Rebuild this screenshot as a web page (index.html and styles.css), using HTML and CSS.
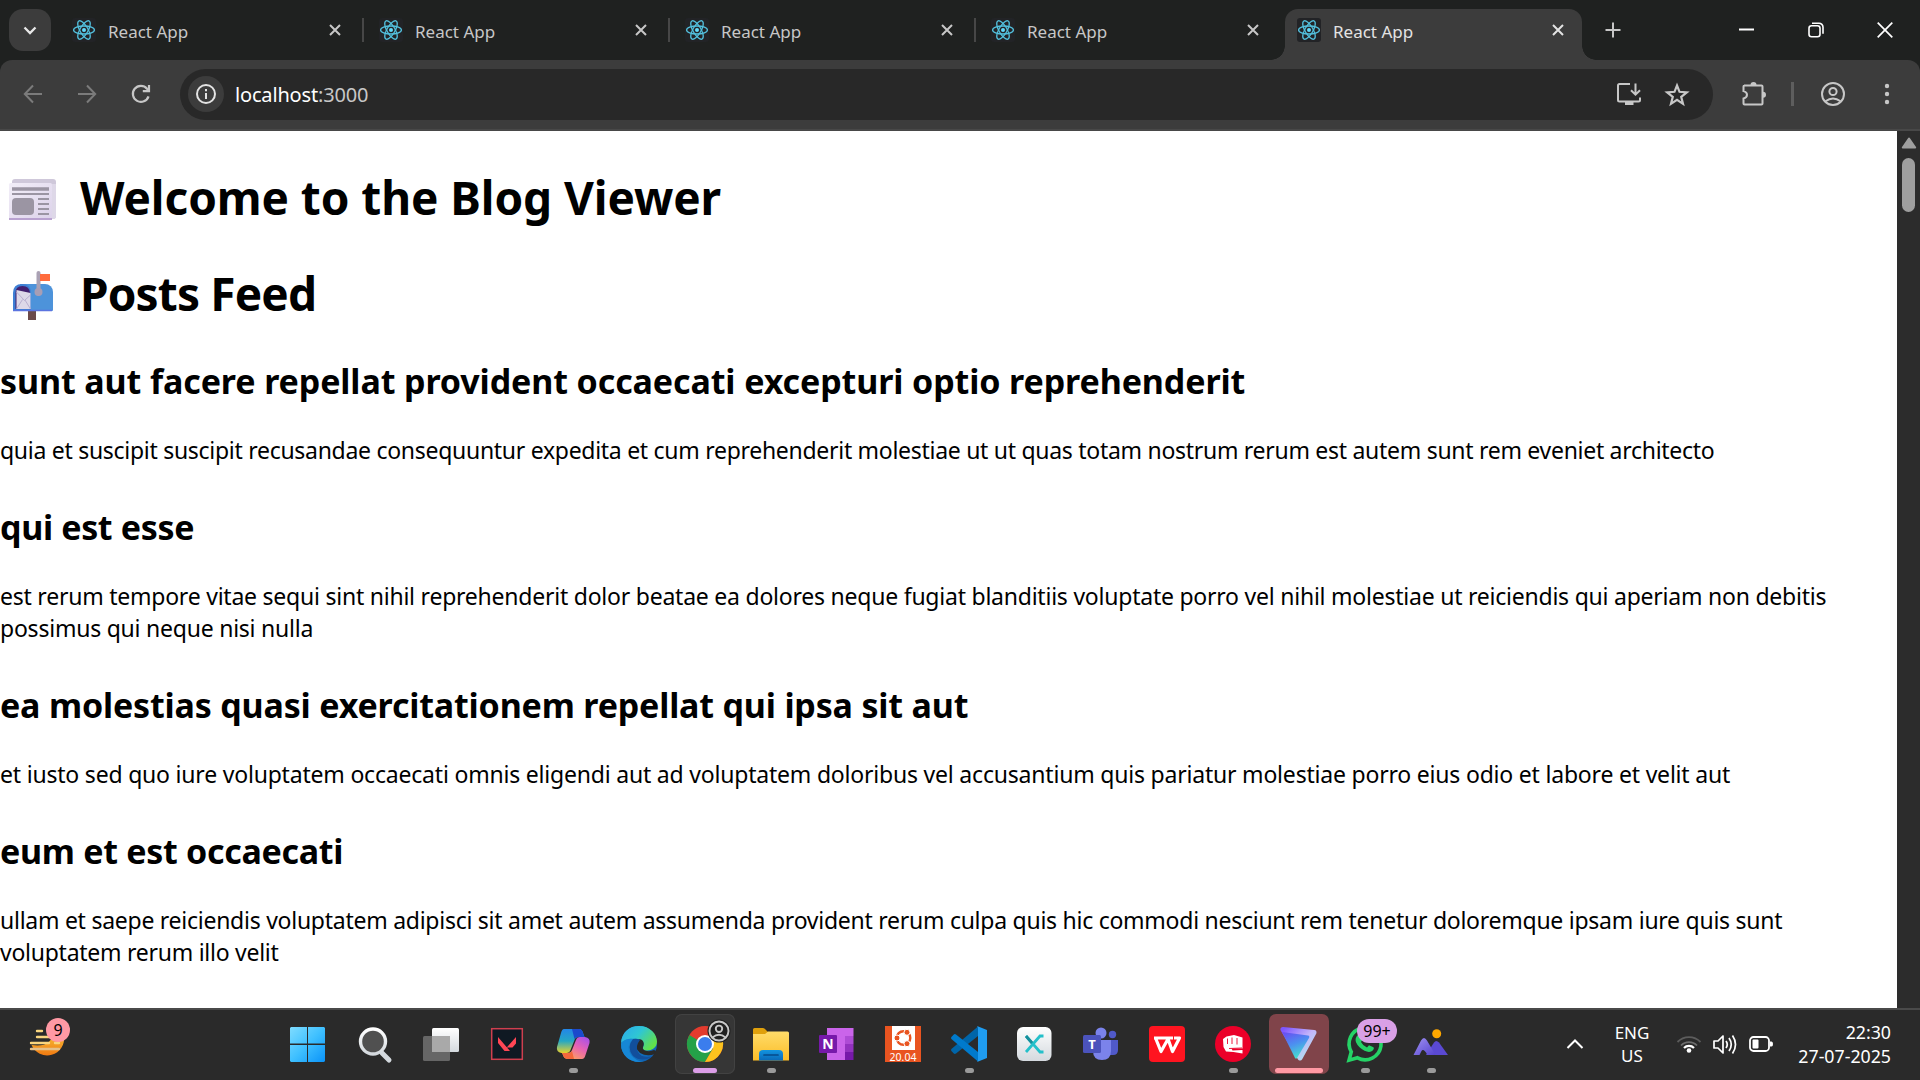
FILE: index.html
```html
<!DOCTYPE html>
<html lang="en">
<head>
<meta charset="utf-8">
<title>React App</title>
<link rel="stylesheet" href="styles.css">
</head>
<body>
<svg width="0" height="0" class="defs">
  <defs>
    <g id="react" fill="none" stroke="#53c1de" stroke-width="1.3">
      <ellipse cx="12" cy="12" rx="10.4" ry="4"/>
      <ellipse cx="12" cy="12" rx="10.4" ry="4" transform="rotate(60 12 12)"/>
      <ellipse cx="12" cy="12" rx="10.4" ry="4" transform="rotate(120 12 12)"/>
      <circle cx="12" cy="12" r="2" fill="#61dafb" stroke="none"/>
    </g>
    <g id="cross" fill="none" stroke-width="2"><path d="M1 1 11 11M11 1 1 11"/></g>
    <linearGradient id="win" x1="0" y1="0" x2="1" y2="1"><stop offset="0" stop-color="#7fdcff"/><stop offset=".5" stop-color="#3fc0ff"/><stop offset="1" stop-color="#0a93f8"/></linearGradient>
    <linearGradient id="moon" x1="0" y1="0" x2="0" y2="1"><stop offset="0" stop-color="#f7c53a"/><stop offset="1" stop-color="#f07a12"/></linearGradient>
    <linearGradient id="silver" x1="0" y1="0" x2="0" y2="1"><stop offset="0" stop-color="#fff"/><stop offset="1" stop-color="#d4d9de"/></linearGradient>
    <linearGradient id="copA" x1="0" y1="0" x2="0" y2="1"><stop offset="0" stop-color="#2386e8"/><stop offset=".5" stop-color="#25a7c4"/><stop offset="1" stop-color="#e8d22c"/></linearGradient>
    <linearGradient id="copB" x1="1" y1="0" x2=".3" y2="1"><stop offset="0" stop-color="#a04df0"/><stop offset=".5" stop-color="#e763b3"/><stop offset="1" stop-color="#ffa35c"/></linearGradient>
    <linearGradient id="edgeTop" x1="0" y1="0" x2="1" y2=".6"><stop offset="0" stop-color="#2ba8ee"/><stop offset=".5" stop-color="#2fc6d4"/><stop offset="1" stop-color="#62e04a"/></linearGradient>
    <linearGradient id="edgeLow" x1="0" y1="0" x2="1" y2="1"><stop offset="0" stop-color="#1b9de2"/><stop offset="1" stop-color="#0d55a8"/></linearGradient>
    <linearGradient id="folder" x1="0" y1="0" x2="0" y2="1"><stop offset="0" stop-color="#ffdc6a"/><stop offset="1" stop-color="#fbbd28"/></linearGradient>
    <linearGradient id="blueTab" x1="0" y1="0" x2="0" y2="1"><stop offset="0" stop-color="#1294e0"/><stop offset="1" stop-color="#0a69b8"/></linearGradient>
    <linearGradient id="proton" x1=".1" y1="0" x2=".5" y2="1"><stop offset="0" stop-color="#6a4cf2"/><stop offset=".5" stop-color="#4c8ff0"/><stop offset="1" stop-color="#45e0cf"/></linearGradient>
    <linearGradient id="protonEdge" x1="0" y1="0" x2="1" y2="1"><stop offset="0" stop-color="#7d55ff"/><stop offset=".5" stop-color="#c4b5fa"/><stop offset="1" stop-color="#a9ecec"/></linearGradient>
    <linearGradient id="hill" x1="0" y1="0" x2="1" y2="1"><stop offset="0" stop-color="#a192f2"/><stop offset="1" stop-color="#5443cf"/></linearGradient>
    <linearGradient id="paper" x1="0" y1="0" x2="1" y2="1"><stop offset="0" stop-color="#f2eef8"/><stop offset="1" stop-color="#dcd2ea"/></linearGradient>
  </defs>
</svg>

<div class="screen">
  <header class="tabstrip">
    <button class="tab-search"><svg width="14" height="9" viewBox="0 0 14 9"><path d="M1.5 1.5 7 7l5.500-5.500" fill="none" stroke="#e8e8e8" stroke-width="2.300"/></svg></button>
    <div class="tabs">
      <div class="tab first"><svg class="favicon" viewBox="0 0 24 24"><rect width="24" height="24" rx="3" fill="#222326"/><use href="#react"/></svg><span class="tab-title">React App</span><svg class="tab-close" viewBox="0 0 12 12"><use href="#cross"/></svg></div>
      <div class="tab"><svg class="favicon" viewBox="0 0 24 24"><rect width="24" height="24" rx="3" fill="#222326"/><use href="#react"/></svg><span class="tab-title">React App</span><svg class="tab-close" viewBox="0 0 12 12"><use href="#cross"/></svg></div>
      <div class="tab"><svg class="favicon" viewBox="0 0 24 24"><rect width="24" height="24" rx="3" fill="#222326"/><use href="#react"/></svg><span class="tab-title">React App</span><svg class="tab-close" viewBox="0 0 12 12"><use href="#cross"/></svg></div>
      <div class="tab last"><svg class="favicon" viewBox="0 0 24 24"><rect width="24" height="24" rx="3" fill="#222326"/><use href="#react"/></svg><span class="tab-title">React App</span><svg class="tab-close" viewBox="0 0 12 12"><use href="#cross"/></svg></div>
      <div class="tab active"><svg class="favicon" viewBox="0 0 24 24"><rect width="24" height="24" rx="3" fill="#222326"/><use href="#react"/></svg><span class="tab-title">React App</span><svg class="tab-close" viewBox="0 0 12 12"><use href="#cross"/></svg></div>
    </div>
    <svg class="new-tab" width="16" height="16" viewBox="0 0 16 16"><path d="M8 .5v15M.5 8h15" stroke="#c7c7c7" stroke-width="2"/></svg>
    <div class="window-controls">
      <svg width="16" height="16" viewBox="0 0 16 16"><path d="M0 7.500h15" stroke="#fff" stroke-width="2"/></svg>
      <svg width="16" height="16" viewBox="0 0 16 16" fill="none" stroke="#fff" stroke-width="1.600"><rect x="1" y="3.800" width="11" height="11" rx="2.500"/><path d="M4 1.200h7a4 4 0 0 1 4 4v6.500"/></svg>
      <svg width="16" height="16" viewBox="0 0 16 16"><path d="M.7.7 15.300 15.300M15.300.7.7 15.300" stroke="#fff" stroke-width="1.700"/></svg>
    </div>
  </header>

  <nav class="toolbar">
    <div class="nav-buttons">
      <svg width="20" height="20" viewBox="0 0 20 20" fill="none" stroke="#7b7b7b" stroke-width="2"><path d="M19 10H2M10 1.500 1.800 10l8.200 8.500"/></svg>
      <svg width="20" height="20" viewBox="0 0 20 20" fill="none" stroke="#7b7b7b" stroke-width="2"><path d="M1 10h17M10 1.500l8.200 8.500-8.200 8.500"/></svg>
      <svg width="20" height="20" viewBox="0 0 20 20" fill="none" stroke="#c7c7c7" stroke-width="2.200"><path d="M17.500 12.300A8 8 0 1 1 16 4.700l2 2M18 1v6.200h-6.200"/></svg>
    </div>
    <div class="omnibox">
      <span class="site-info"><svg width="22" height="22" viewBox="0 0 22 22"><circle cx="11" cy="11" r="9" fill="none" stroke="#e3e3e3" stroke-width="2"/><path d="M11 10v6M11 6v2.200" stroke="#e3e3e3" stroke-width="2"/></svg></span>
      <span class="url">localhost<span class="port">:3000</span></span>
      <div class="omni-actions">
        <svg width="26" height="26" viewBox="0 0 26 26" fill="none" stroke="#c7c7c7" stroke-width="2"><path d="M14 3H3.500Q2 3 2 4.500v14.500Q2 20.500 3.500 20.500h19Q24 20.500 24 19v-2.500"/><path d="M9 22.500h8.500" stroke-width="3"/><path d="M19.500 2.500v11M15 9.200l4.500 4.500L24 9.200"/></svg>
        <svg width="26" height="26" viewBox="0 0 26 26" fill="none" stroke="#c7c7c7" stroke-width="2.200"><path d="M13 4.500l2.500 6.300 7.300.500-5.600 4.500 1.800 7-6-3.900-6 3.900 1.800-7-5.600-4.500 7.300-.500z"/></svg>
      </div>
    </div>
    <div class="tool-actions">
      <svg width="26" height="26" viewBox="0 0 26 26"><path d="M3 4.500h17.500q1 0 1 1v17q0 1-1 1H3.500q-1 0-1-1V17.500q3.500-.8 3.500-3.700t-3.500-3.700V5.500q0-1 1-1z" fill="none" stroke="#c7c7c7" stroke-width="2"/><path d="M9.500 4a3 3 0 0 1 6 0zM22 10.800a3 3 0 0 1 0 6z" fill="#c7c7c7" /></svg>
      <i class="divider"></i>
      <svg width="26" height="26" viewBox="0 0 26 26" fill="none" stroke="#c7c7c7" stroke-width="2"><circle cx="13" cy="13" r="11"/><circle cx="13" cy="10.500" r="3.600"/><path d="M5.500 20.300q7.500-5.500 15 0"/></svg>
      <svg class="menu-dots" width="6" height="22" viewBox="0 0 6 22" fill="#c7c7c7"><circle cx="3" cy="3" r="2.200"/><circle cx="3" cy="11" r="2.200"/><circle cx="3" cy="19" r="2.200"/></svg>
    </div>
  </nav>

  <div class="viewport">
    <main class="page">
      <h1 class="title"><svg class="emoji" width="60" height="56" viewBox="0 0 60 56"><rect x="12" y="7" width="44" height="40" rx="3" fill="#cfc8da"/><path d="M52 12h4v32q0 3-3 3h-3z" fill="#ded8e8"/><rect x="9" y="11" width="43" height="37" rx="1.500" fill="url(#paper)"/><path d="M9 47h43" stroke="#b9a2d0" stroke-width="2"/><g stroke="#9b95a3" fill="none"><path d="M12 17h37" stroke-width="3.400"/><path d="M12 22h37M38 27h11M38 32h11M38 37h11M38 42h11" stroke-width="2"/></g><rect x="12" y="26" width="22" height="17" rx="4" fill="#9b95a3"/></svg><span class="welcome">Welcome to the Blog Viewer</span></h1>
      <h1 class="title"><svg class="emoji" width="60" height="56" viewBox="0 0 60 56"><rect x="28" y="38" width="8" height="14" fill="#6b4a4a"/><path d="M20 16h25a8 8 0 0 1 8 8v18q0 1-1 1H20z" fill="#4d93da"/><path d="M13 43V25q0-9 9-9t9 9v18z" fill="#3f7fd4"/><path d="M15.500 41V25q0-7 7-7t7.500 7v16z" fill="#43206f"/><path d="M16.500 22l14 3v16h-14z" fill="#ddd8e8"/><path d="M16.500 24l8 8.500 6-5.500M16.500 41l6-9.500M30.500 41l-5.500-9" fill="none" stroke="#b9afd0"/><path d="M13 42.500h39" stroke="#5b74e0" stroke-width="1.500"/><path d="M38.500 5v21" stroke="#aaa1b4" stroke-width="4" stroke-linecap="round"/><circle cx="38.500" cy="24" r="4" fill="#a79eb5"/><rect x="40" y="6" width="10" height="7" fill="#ff6b3d"/></svg><span class="feed">Posts Feed</span></h1>
      <article class="post post-1"><h2>sunt aut facere repellat provident occaecati excepturi optio reprehenderit</h2><p>quia et suscipit suscipit recusandae consequuntur expedita et cum reprehenderit molestiae ut ut quas totam nostrum rerum est autem sunt rem eveniet architecto</p></article>
      <article class="post post-2"><h2>qui est esse</h2><p>est rerum tempore vitae sequi sint nihil reprehenderit dolor beatae ea dolores neque fugiat blanditiis voluptate porro vel nihil molestiae ut reiciendis qui aperiam non debitis possimus qui neque nisi nulla</p></article>
      <article class="post post-3"><h2>ea molestias quasi exercitationem repellat qui ipsa sit aut</h2><p>et iusto sed quo iure voluptatem occaecati omnis eligendi aut ad voluptatem doloribus vel accusantium quis pariatur molestiae porro eius odio et labore et velit aut</p></article>
      <article class="post post-4"><h2>eum et est occaecati</h2><p>ullam et saepe reiciendis voluptatem adipisci sit amet autem assumenda provident rerum culpa quis hic commodi nesciunt rem tenetur doloremque ipsam iure quis sunt voluptatem rerum illo velit</p></article>
    </main>
    <aside class="scrollbar"><svg width="16" height="12" viewBox="0 0 16 12"><path d="M8 1.500 14.200 10.500H1.800z" fill="#9f9f9f" stroke="#9f9f9f" stroke-width="2" stroke-linejoin="round"/></svg><i class="thumb"></i></aside>
  </div>

  <footer class="taskbar">
    <div class="widget"><svg width="40" height="40" viewBox="0 0 40 40"><path d="M36 12a17 17 0 0 1-32.500 9Q24 24 25 8z" fill="url(#moon)"/><g stroke="#f9d57e" stroke-width="2.400" stroke-linecap="round"><path d="M9 7h5M9 13h22M3 19h18M27 19h4" /><path d="M3 25h28" stroke="#e4c08a"/></g></svg><span class="badge pink">9</span></div>
    <div class="apps">
      <svg class="app" viewBox="0 0 60 60"><path d="M12 13h16v16.500H11V14zM29 13h16l1 1v15.500H29zM11 31h17v17H12l-1-1zM29 31h17v16l-1 1H29z" fill="url(#win)"/></svg>
      <svg class="app" viewBox="0 0 60 60"><path d="M37 39l7 7" stroke="#d4d9de" stroke-width="5" stroke-linecap="round"/><circle cx="28" cy="27.500" r="12.500" fill="#505050" stroke="url(#silver)" stroke-width="3.400"/></svg>
      <svg class="app" viewBox="0 0 60 60"><rect x="21" y="14" width="27" height="24" rx="1.500" fill="url(#silver)"/><rect x="12" y="22" width="27" height="25" rx="1.500" fill="#666" /><path d="M21 22h18v16H21z" fill="#a9a9a9"/></svg>
      <svg class="app" viewBox="0 0 60 60"><rect x="14.700" y="14.700" width="30.600" height="30.600" fill="#0f1923" stroke="#cf3f4e" stroke-width="1.500"/><path d="M21 23l12 14h-5.500L21 29zM39 23v6.500L35.500 33.500h-5.800z" fill="#ff4655"/></svg>
      <div class="app-slot running"><svg class="app" viewBox="0 0 60 60"><path d="M21 15h15q3 0 4 4l1.500 4h-6q-3 0-4 3l-4 10q-1 3-4 3h-5q-5.500-1-4.500-6l4-14q1-4 3-4z" fill="url(#copA)"/><path d="M29 15h7q3 0 4 4l1.500 4h-6q-3 0-4 2z" fill="#1b49cc"/><path d="M39 45H25q-4 0-5-4l-1-2h6q3 0 4-3l4-10q1-3 4-3h5q5.500 1 4.500 6l-4 12q-1 4-3.500 4z" fill="url(#copB)"/><path d="M31 45h-6q-4 0-5-4l-1-2h6q3 0 4-2z" fill="#f4683c"/></svg></div>
      <svg class="app" viewBox="0 0 60 60"><circle cx="30" cy="30" r="18" fill="url(#edgeLow)"/><path d="M12 29C13 18 20 12 30 12c11 0 18 8 18 15.500 0 6-5 9-10 9-3 0-5-1-4-3 2-4 0-8-5-8.500-8-1-15 .500-17 4z" fill="url(#edgeTop)"/><path d="M24 25q-8 7-2 16 6 7 13 7-14 1-19.500-7Q10 33 14 28q4-4 10-3z" fill="#1687d6"/><path d="M33 26q3 3 1 7-1 3 4 4 4 .500 7-1l2 1-1 3q-8 3-15-1-6-5-3-12 2-3 5-1z" fill="#292929"/><path d="M24 25q-7 8 0 17 9 7 20 0-11 3-15-4-3-6 2-12-3-2-7-1z" fill="#124f9c"/></svg>
      <div class="app-slot focused"><svg class="app" viewBox="0 0 60 60"><circle cx="30" cy="30" r="18" fill="#e33b2e"/><path d="M14.400 21A18 18 0 0 0 30 48l8-13.500-8-4z" fill="#24a148"/><path d="M45.600 21A18 18 0 0 1 30 48l8-13.500V21z" fill="#fcc31e"/><circle cx="30" cy="30" r="9" fill="#fff"/><circle cx="30" cy="30" r="7" fill="#3b7ded"/><circle cx="44" cy="17" r="11.500" fill="#202020"/><g fill="none" stroke="#c7c7c7" stroke-width="1.900"><circle cx="44" cy="17" r="9.500"/><circle cx="44" cy="14.800" r="3.200"/><path d="M37.500 23.500q6.500-5.500 13 0"/></g></svg></div>
      <div class="app-slot running"><svg class="app" viewBox="0 0 60 60"><path d="M12 22V15.500q0-1.500 1.500-1.500H22q1.500 0 2.500 1.500L27 18v5H12z" fill="#dfa00c"/><path d="M12 20h12l3-2.500h19.500q1.500 0 1.500 1.500v27.500H12z" fill="url(#folder)"/><path d="M18 46.500V40q0-4 4-4h16q4 0 4 4v6.500z" fill="url(#blueTab)"/><path d="M23 41h14" stroke="#064a8a" stroke-width="1.700" stroke-linecap="round"/></svg></div>
      <svg class="app" viewBox="0 0 60 60"><path d="M20 14h18v32H20z" fill="#ca64ea"/><path d="M38 14h8.500v8H38z" fill="#ca64ea"/><path d="M38 22h8.500v8H38z" fill="#ae4bd5"/><path d="M38 30h8.500v8H38z" fill="#9332bf"/><path d="M38 38h8.500v8H38z" fill="#7719aa"/><rect x="12" y="21" width="18" height="18" rx="1" fill="#7719aa"/><text x="21" y="35" class="glyph g-note">N</text></svg>
      <svg class="app" viewBox="0 0 60 60"><path d="M12 12h36v36H12z" fill="#e95420"/><path d="M19 12h23v24H19z" fill="#fff"/><circle cx="30.500" cy="24" r="6.800" fill="none" stroke="#e95420" stroke-width="2.400"/><g fill="#e95420" stroke="#fff" stroke-width="1"><circle cx="24" cy="24" r="3"/><circle cx="34" cy="18.300" r="3"/><circle cx="34" cy="29.700" r="3"/></g><text x="30" y="47" class="glyph g-ver">20.04</text></svg>
      <div class="app-slot running"><svg class="app" viewBox="0 0 60 60"><path d="M39 12.500v9.500L17 39.500q-1.200.8-2.200 0L12.400 37q-.8-1 0-2z" fill="#0065a9"/><path d="M39 47.500V38L17 20.500q-1.200-.8-2.200 0L12.400 23q-.8 1 0 2z" fill="#007acc"/><path d="M38 12l10 4v28l-10 4q1-1 1-2.500v-31Q39 13 38 12z" fill="#1f9cf0"/></svg></div>
      <svg class="app" viewBox="0 0 60 60"><rect x="12" y="13" width="34.500" height="34" rx="6" fill="url(#silver)"/><path d="M21 22l7 8-7 8M38.500 22H35l-7 8 7 8h3.500" fill="none" stroke="#24c0ca" stroke-width="2.800"/><path d="M21 22l6 7" stroke="#178f9c" stroke-width="2.800"/></svg>
      <svg class="app" viewBox="0 0 60 60"><circle cx="30" cy="19" r="5.500" fill="#7b83eb"/><circle cx="41.500" cy="20.500" r="3.700" fill="#5059c9"/><path d="M37 26h10v10q0 5-5 5h-5z" fill="#5059c9"/><path d="M22 26h18v11q0 9-9 9t-9-9z" fill="#7b83eb"/><rect x="12" y="21" width="18" height="18" rx="1.500" fill="#4b53bc"/><text x="21" y="34.500" class="glyph g-team">T</text></svg>
      <svg class="app" viewBox="0 0 60 60"><rect x="12" y="12" width="36" height="36" rx="4" fill="#ff1420"/><path d="M17 24h19M18.500 24l5.500 13.500L31 25l4.500 12.500L42.500 24H37" fill="none" stroke="#fff" stroke-width="3.200" stroke-linejoin="round"/></svg>
      <div class="app-slot running"><svg class="app" viewBox="0 0 60 60"><circle cx="30" cy="30" r="18" fill="#eb0029"/><path d="M20 25l3.500-2.500L31 21l8.500 2.500v11H28.500L29.500 36.500l10-.500v3.500l-9-1.500-7.500-.500L20.500 33z" fill="#fff"/><path d="M24.500 24.500v5.500M29 23.500v6.500M34 24v6.500M26 34.500l13-.500" stroke="#eb0029" stroke-width=".9"/></svg></div>
      <div class="app-slot alert"><svg class="app" viewBox="0 0 60 60"><path d="M14 15.500 45 18.500 31 44z" fill="url(#protonEdge)" stroke="url(#protonEdge)" stroke-width="5" stroke-linejoin="round"/><path d="M13 18 39 21.500q2 .500 1 2.500L28 44q-1 1.500-2 0z" fill="url(#proton)"/></svg></div>
      <div class="app-slot running"><svg class="app" viewBox="0 0 60 60"><path d="M14 46.200l2.300-8.400A16 16 0 1 1 22.500 43.800z" fill="none" stroke="#25d366" stroke-width="3.600"/><path d="M23 21.500q2-1.500 3 .500l1.500 3.500-1.500 2.500q2 4 6 5.500l2-2.200 4.500 2q1 1.200-.5 3-3 3-8.500.500-6-3-8.500-8.500-1.500-4.500 2-7.300z" fill="#25d366"/></svg><span class="badge lilac">99+</span></div>
      <div class="app-slot running"><svg class="app" viewBox="0 0 60 60"><circle cx="35.700" cy="19.700" r="4.500" fill="#ffa800"/><path d="M25 41l8-12.500q2-3 5 0l9 12.500z" fill="#5a49d2"/><path d="M12.500 41l7.500-14.500q3-5 6 0l8.500 14.500h-8q-4-7-6-4l-2 4z" fill="url(#hill)"/></svg></div>
    </div>
    <div class="tray">
      <svg class="chevron" width="18" height="12" viewBox="0 0 18 12"><path d="M1.500 10 9 2.500 16.500 10" fill="none" stroke="#fff" stroke-width="2"/></svg>
      <div class="lang"><span>ENG</span><span>US</span></div>
      <div class="status">
        <svg width="26" height="24" viewBox="0 0 26 24" fill="none" stroke-width="1.800"><path d="M1.500 10a16 16 0 0 1 23 0" stroke="#5c5c5c"/><path d="M5 13.500a11 11 0 0 1 16 0" stroke="#6d6d6d"/><path d="M8 16a7 7 0 0 1 10 0" stroke="#fff" stroke-width="2.200"/><circle cx="13" cy="18.500" r="2.300" fill="#fff"/></svg>
        <svg width="26" height="24" viewBox="0 0 26 24" fill="none" stroke="#fff" stroke-width="1.700"><path d="M2 9h4l5-5v17l-5-5H2z" stroke-linejoin="round"/><path d="M14 9q2.500 3.500 0 7M17 6q4.500 6.500 0 13M20.500 3.500q6 9 0 18"/></svg>
        <svg width="26" height="24" viewBox="0 0 26 24"><rect x="2" y="5" width="19" height="14" rx="3.500" fill="none" stroke="#fff" stroke-width="1.800"/><rect x="4.500" y="7.500" width="6" height="9" rx="1" fill="#fff"/><path d="M22 9.500h1.500q1.500 0 1.500 2.500t-1.500 2.500H22z" fill="#fff"/></svg>
      </div>
      <div class="clock"><span>22:30</span><span>27-07-2025</span></div>
    </div>
  </footer>
</div>
</body>
</html>
```
FILE: styles.css
```css
* { box-sizing: border-box; }
body { margin: 0; background: #fff; font-family: "Noto Sans", "Open Sans", sans-serif; overflow: hidden; }
svg { display: block; flex: none; }
.defs { position: absolute; }
.screen { width: 1920px; height: 1080px; display: flex; flex-direction: column; overflow: hidden; background: #1f2120; }

.tabstrip { height: 60px; flex: none; display: flex; align-items: center; padding-left: 9px; }
.tab-search { width: 42px; height: 42px; border: 0; border-radius: 14px; background: #3c3c3c; display: grid; place-items: center; padding: 0; }
.tabs { display: flex; height: 100%; padding-left: 10px; align-items: flex-end; }
.tab { position: relative; width: 306px; height: 51px; display: flex; align-items: center; padding: 0 26px 9px 12px; color: #c7c7c7; }
.first { padding-left: 11px; }
.tab:not(.last):not(.active)::after { content: ""; position: absolute; right: 3px; top: 9px; width: 2px; height: 24px; background: #474747; }
.last::after { content: ""; position: absolute; right: 3px; top: 9px; width: 2px; height: 24px; }
.favicon { width: 24px; height: 24px; }
.tab-title { font-size: 17px; line-height: 24px; margin-left: 12px; padding-top: 3px; flex: 1; }
.tab-close { width: 12px; height: 12px; stroke: currentColor; }
.active { width: 297px; padding-right: 18px; background: #3c3c3c; border-radius: 13px 13px 0 0; color: #e3e3e3; }
.active::before, .active::after { content: ""; position: absolute; bottom: 0; width: 14px; height: 14px; }
.active::before { left: -14px; background: radial-gradient(circle at 0 0, #1f2120 13.5px, #3c3c3c 14px); }
.active::after { right: -14px; background: radial-gradient(circle at 100% 0, #1f2120 13.5px, #3c3c3c 14px); }
.new-tab { margin-left: 23px; }
.window-controls { margin-left: auto; display: flex; gap: 53px; padding-right: 27px; }

.toolbar { height: 71px; flex: none; display: flex; align-items: center; background: #3c3c3c; border-bottom: 2px solid #484848; border-radius: 12px 12px 0 0; padding-bottom: 1px; }
.nav-buttons { display: flex; gap: 34px; padding: 0 29px 0 23px; }
.omnibox { width: 1533px; height: 51px; border-radius: 26px; background: #282828; display: flex; align-items: center; padding: 0 23px 0 8px; }
.site-info { width: 36px; height: 36px; border-radius: 50%; background: #3c3c3c; display: grid; place-items: center; }
.url { color: #fff; font-size: 20px; letter-spacing: -.17px; margin-left: 11px; }
.port { color: #c7c7c7; }
.omni-actions { display: flex; gap: 22px; margin-left: auto; }
.tool-actions { display: flex; align-items: center; margin-left: 28px; }
.divider { width: 3px; height: 24px; background: #5e5e5e; margin: 0 27px 0 24px; }
.menu-dots { margin-left: 38px; }
.tool-actions .divider + svg { margin-left: -1px; }

.viewport { height: 877px; flex: none; display: flex; background: #fff; }
.page { flex: 1; height: 877px; overflow: hidden; color: #000; }
.title { margin: 0; height: 96px; display: flex; align-items: center; font-size: 46px; line-height: 64px; font-weight: 700; }
.title:first-child { margin-top: 21px; }
.title span { padding-bottom: 7px; }
.welcome { letter-spacing: -.08px; }
.feed { letter-spacing: -.85px; }
.emoji { margin-right: 20px; }
.title + .post { margin-top: 13px; }
.post h2 { margin: 0 0 29px; font-size: 34px; line-height: 48px; font-weight: 700; white-space: nowrap; }
.post p { margin: 0 0 37px; font-size: 23px; line-height: 32px; }
.post-1 h2 { letter-spacing: -.11px; }
.post-1 p { letter-spacing: -.285px; }
.post-2 h2 { letter-spacing: -.35px; }
.post-2 p { letter-spacing: -.23px; }
.post-3 h2 { letter-spacing: -.18px; }
.post-3 p { letter-spacing: -.2px; }
.post-4 h2 { letter-spacing: -.3px; }
.post-4 p { letter-spacing: -.26px; }
.scrollbar { width: 23px; background: #2c2c2c; display: flex; flex-direction: column; align-items: center; padding-top: 6px; }
.thumb { width: 13px; height: 54px; border-radius: 7px; background: #9f9f9f; margin-top: 9px; }

.taskbar { height: 72px; flex: none; display: flex; background: #2a2a2a; border-top: 2px solid #4a4a4a; color: #fff; }
.widget { position: relative; width: 276px; padding: 14px 0 0 28px; }
.badge { position: absolute; height: 24px; border-radius: 12px; color: #000; font-size: 16px; line-height: 24px; text-align: center; }
.pink { left: 46px; top: 8px; width: 24px; background: #ff99a4; }
.lilac { left: 22px; top: 5px; width: 40px; background: #d9a0e6; }
.apps { display: flex; gap: 6px; padding: 4px 3px 0; }
.app { width: 60px; height: 60px; }
.app-slot { position: relative; width: 60px; height: 60px; border-radius: 7px; }
.running::after, .focused::after, .alert::after { content: ""; position: absolute; bottom: 1px; height: 5px; border-radius: 3px; left: 26px; width: 9px; background: #9a9a9a; }
.focused { background: #363636; box-shadow: inset 0 0 0 1px #424242; }
.focused::after { left: 18px; width: 24px; background: #dc9ee8; }
.alert { background: #80444a; }
.alert::after { left: 6px; width: 48px; background: #ff99a4; }
.glyph { fill: #fff; text-anchor: middle; font-family: "Noto Sans", sans-serif; }
.g-note { font-size: 14px; font-weight: 700; }
.g-team { font-size: 13px; font-weight: 700; }
.g-ver { font-size: 10.5px; }
.tray { margin-left: auto; display: flex; align-items: center; padding-right: 29px; font-size: 17px; line-height: 23px; height: 67px; }
.chevron { margin-right: 30px; }
.lang { display: flex; flex-direction: column; align-items: center; width: 36px; margin-right: 26px; padding-top: 1px; }
.status { display: flex; gap: 10px; margin-right: 24px; padding-top: 1px; }
.clock { display: flex; flex-direction: column; align-items: flex-end; font-size: 17.75px; line-height: 24px; width: 93px; }
```
